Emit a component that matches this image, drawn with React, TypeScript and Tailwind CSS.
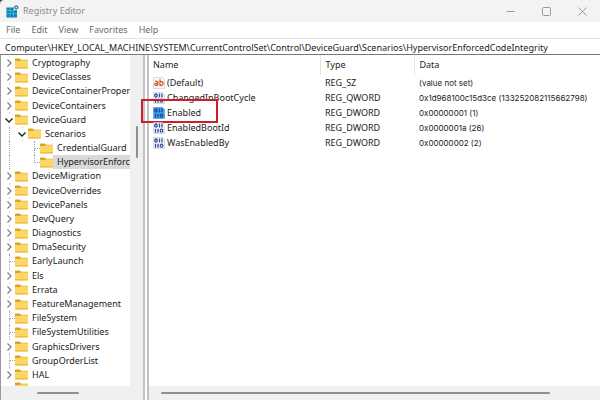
import { useState } from "react";

type TreeNode = {
  name: string;
  depth: number;
  toggle?: "open" | "closed";
  last?: boolean;
};

type RegValue = {
  name: string;
  type: string;
  data: string;
  kind: "string" | "binary";
};

const menus = ["File", "Edit", "View", "Favorites", "Help"];

const nodes: TreeNode[] = [
  { name: "Cryptography", depth: 0, toggle: "closed" },
  { name: "DeviceClasses", depth: 0, toggle: "closed" },
  { name: "DeviceContainerPropertyUpdateEvents", depth: 0, toggle: "closed" },
  { name: "DeviceContainers", depth: 0, toggle: "closed" },
  { name: "DeviceGuard", depth: 0, toggle: "open" },
  { name: "Scenarios", depth: 1, toggle: "open" },
  { name: "CredentialGuard", depth: 2 },
  { name: "HypervisorEnforcedCodeIntegrity", depth: 2, last: true },
  { name: "DeviceMigration", depth: 0, toggle: "closed" },
  { name: "DeviceOverrides", depth: 0, toggle: "closed" },
  { name: "DevicePanels", depth: 0, toggle: "closed" },
  { name: "DevQuery", depth: 0, toggle: "closed" },
  { name: "Diagnostics", depth: 0, toggle: "closed" },
  { name: "DmaSecurity", depth: 0, toggle: "closed" },
  { name: "EarlyLaunch", depth: 0 },
  { name: "Els", depth: 0, toggle: "closed" },
  { name: "Errata", depth: 0, toggle: "closed" },
  { name: "FeatureManagement", depth: 0, toggle: "closed" },
  { name: "FileSystem", depth: 0 },
  { name: "FileSystemUtilities", depth: 0 },
  { name: "GraphicsDrivers", depth: 0, toggle: "closed" },
  { name: "GroupOrderList", depth: 0 },
  { name: "HAL", depth: 0, toggle: "closed" },
];

const values: RegValue[] = [
  { name: "(Default)", type: "REG_SZ", data: "(value not set)", kind: "string" },
  {
    name: "ChangedInBootCycle",
    type: "REG_QWORD",
    data: "0x1d968100c15d3ce (133252082115662798)",
    kind: "binary",
  },
  { name: "Enabled", type: "REG_DWORD", data: "0x00000001 (1)", kind: "binary" },
  { name: "EnabledBootId", type: "REG_DWORD", data: "0x0000001a (26)", kind: "binary" },
  { name: "WasEnabledBy", type: "REG_DWORD", data: "0x00000002 (2)", kind: "binary" },
];

const AppIcon = () => (
  <svg viewBox="0 0 13 13" className="size-[13px] shrink-0">
    <path d="M.5 2.5H8v2.700h3V12.500H.5z" fill="#0b7fae" />
    <path d="M.5 5.500H8M.5 8.700h10.500M4 2.500v10M7.500 2.500v10" stroke="#45c3e6" strokeWidth=".8" />
    <path d="M10.200 0l2.200 1.200v2.400l-2.200 1.200L8.300 3.600V1.200z" fill="#2a86ae" />
    <path d="M10.300 1.200l1.100 1.200-1.100 1.200-1-1.200z" fill="#bfe8f5" />
  </svg>
);

const FolderIcon = () => (
  <svg viewBox="0 0 12 11" preserveAspectRatio="none" className="h-[11px] w-[13px] shrink-0">
    <path d="M0 1.2Q0 .5.7.5h3.6l1.4 1.3h5.6q.7 0 .7.7V6H0z" fill="#dba520" />
    <path d="M0 3.6q0-.6.7-.6h3.8l1.2-.7h5.6q.7 0 .7.7v6.800q0 .7-.7.7H.7q-.7 0-.7-.7z" fill="#fcd667" />
    <path d="M0 9h12v.8q0 .7-.7.7H.7q-.7 0-.7-.7z" fill="#f3bf40" />
  </svg>
);

const ValueIcon = ({ kind, selected }: { kind: string; selected: boolean }) => (
  <svg viewBox="0 0 12 12" className="size-3 shrink-0">
    <path
      d="M.5.5h9l2 2v9H.5z"
      fill={selected ? "#4ba6ea" : "#f8f8f8"}
      stroke={selected ? "#2f8bd6" : "#c4c4c4"}
      strokeWidth=".6"
    />
    {kind === "string" ? (
      <g fill="none" stroke="#d2502c" strokeWidth="1.2">
        <path d="M2 4.4h2q.9 0 .9.9v3M4.9 6.3H3q-1.2 0-1.2 1t1.2 1h1.900" />
        <path d="M7 2.2v6.1h1.8q1.2 0 1.2-1.2V5.800q0-1.200-1.200-1.200H7" />
      </g>
    ) : (
      <g fill="none" stroke={selected ? "#0c4d9c" : "#2f4ba8"} strokeWidth="1.300">
        <ellipse cx="3" cy="3.500" rx="1.200" ry="1.500" />
        <path d="M6.500 1.500v4M9 1.500v4M2.500 6.700v4M5 6.700v4" />
        <ellipse cx="8.500" cy="8.700" rx="1.300" ry="1.500" />
      </g>
    )}
  </svg>
);

const Toggle = ({ node, onClick }: { node: TreeNode; onClick: () => void }) => (
  <button
    aria-label={`Toggle ${node.name}`}
    onClick={onClick}
    className="flex h-full w-3 shrink-0 flex-col items-center justify-between"
  >
    <span className="size-px bg-[#ccc]"></span>
    <svg viewBox="0 0 8 8" className="size-2 shrink-0" fill="none">
      {node.toggle === "open" ? (
        <path d="M.5 2.500l3.500 3.500 3.500-3.500" stroke="#222" strokeWidth="1.400" />
      ) : (
        <path d="M2.500.5l3.500 3.500-3.500 3.500" stroke="#777" strokeWidth="1.100" />
      )}
    </svg>
    <span className="size-px bg-[#ccc]"></span>
  </button>
);

// dotted connector for keys that have no children
const Branch = ({ last }: { last?: boolean }) => (
  <div className="flex h-full w-3 shrink-0 flex-col pl-1.5">
    <div className="flex-1 border-b border-l border-dotted border-[#aaa]"></div>
    <div className={last ? "flex-1" : "flex-1 border-l border-dotted border-[#aaa]"}></div>
  </div>
);

const App = () => {
  // state
  const [path, setPath] = useState(
    "Computer\\HKEY_LOCAL_MACHINE\\SYSTEM\\CurrentControlSet\\Control\\DeviceGuard\\Scenarios\\HypervisorEnforcedCodeIntegrity"
  );
  const [activeKey, setActiveKey] = useState("HypervisorEnforcedCodeIntegrity");
  const [activeValue, setActiveValue] = useState("Enabled");

  return (
    <div className="flex h-screen flex-col overflow-hidden bg-white font-['Noto_Sans',sans-serif] text-[9px] leading-3 text-[#222]">
      {/* title bar */}
      <div className="shrink-0 bg-[#2b3350]">
        <header className="flex h-[22px] items-center justify-between rounded-tl-sm bg-[#f3f3f3] pl-1.5 text-[#8c8c8c]">
          <div className="flex items-center gap-1">
            <AppIcon />
            <h1>Registry Editor</h1>
          </div>
          <div className="flex h-full">
            <button aria-label="Minimize" className="flex w-9 items-center justify-center">
              <svg viewBox="0 0 9 9" className="size-[9px]" stroke="#999" fill="none">
                <path d="M.5 4.500h8" />
              </svg>
            </button>
            <button aria-label="Maximize" className="flex w-9 items-center justify-center">
              <svg viewBox="0 0 9 9" className="size-[9px]" stroke="#999" fill="none">
                <rect x=".5" y=".5" width="8" height="8" rx="1" />
              </svg>
            </button>
            <button aria-label="Close" className="flex w-9 items-center justify-center">
              <svg viewBox="0 0 9 9" className="size-[9px]" stroke="#999" fill="none">
                <path d="M.5.5l8 8M8.500.5l-8 8" />
              </svg>
            </button>
          </div>
        </header>
      </div>

      {/* menu */}
      <nav className="flex h-4 shrink-0 items-center gap-[11px] px-1.5 text-[#6a6a6a]">
        {menus.map((menu) => (
          <button key={menu}>{menu}</button>
        ))}
      </nav>

      {/* address */}
      <input
        aria-label="Address"
        value={path}
        onChange={(e) => setPath(e.target.value)}
        className="h-[17px] w-full shrink-0 border-t border-b border-t-[#e4e4e4] border-b-[#777] px-[5px] pt-px outline-none"
      />

      <main className="flex min-h-0 flex-1">
        {/* tree */}
        <section className="flex w-[145px] shrink-0 flex-col border-r-2 border-l border-r-[#c2c2c6] border-l-[#999] bg-[#f0f0f0]">
          <div className="flex min-h-0 flex-1">
            <div className="flex min-w-0 flex-1 flex-col overflow-hidden bg-white pt-px pl-0.5">
              <ul className="flex min-h-0 flex-1 flex-col">
                {nodes.map((node) => (
                  <li key={node.name} className="flex min-h-0 flex-1 items-center">
                    {node.depth > 0 && (
                      <div className="h-full w-[13px] shrink-0 pl-1.5">
                        <div className="h-full border-l border-dotted border-[#aaa]"></div>
                      </div>
                    )}
                    {node.depth > 1 && <div className="w-3 shrink-0"></div>}
                    {node.toggle ? (
                      <Toggle node={node} onClick={() => setActiveKey(node.name)} />
                    ) : (
                      <Branch last={node.last} />
                    )}
                    <FolderIcon />
                    <button
                      onClick={() => setActiveKey(node.name)}
                      className={`h-full min-w-0 flex-1 overflow-hidden pl-1 text-left whitespace-nowrap ${
                        node.name === activeKey ? "bg-[#d9d9d9]" : ""
                      }`}
                    >
                      {node.name}
                    </button>
                  </li>
                ))}
              </ul>
              <div className="h-1 shrink-0 overflow-hidden pl-3">
                <FolderIcon />
              </div>
            </div>
            <div className="flex w-[13px] shrink-0 justify-center pt-[71px]">
              <div className="h-8 w-0.5 rounded-full bg-[#8f8f8f]"></div>
            </div>
          </div>
          <div className="flex h-[14px] shrink-0 items-center pl-9">
            <div className="h-0.5 w-[42px] rounded-full bg-[#8f8f8f]"></div>
          </div>
        </section>

        {/* values */}
        <section className="ml-0.5 flex min-w-0 flex-1 flex-col border-l-2 border-[#c2c2c6]">
          <div className="min-h-0 flex-1">
            <table className="w-full table-fixed border-collapse text-left">
              <colgroup>
                <col className="w-[171px]" />
                <col className="w-[94px]" />
                <col />
              </colgroup>
              <thead>
                <tr className="h-5">
                  <th className="pl-1 font-normal">Name</th>
                  <th className="border-l border-[#e5e5e5] pl-[5px] font-normal">Type</th>
                  <th className="border-l border-[#e5e5e5] pl-[5px] font-normal">Data</th>
                </tr>
              </thead>
              <tbody>
                {values.map((value) => (
                  <tr key={value.name} className="h-[15px]" onClick={() => setActiveValue(value.name)}>
                    <td className="p-0 pl-1">
                      <div className="relative flex items-center gap-0.5">
                        <ValueIcon kind={value.kind} selected={value.name === activeValue} />
                        {value.name}
                        {value.name === activeValue && (
                          <div className="absolute -top-2 -left-3 h-6 w-[77px] border-2 border-[#cb2027]"></div>
                        )}
                      </div>
                    </td>
                    <td className="p-0 pl-[5px]">{value.type}</td>
                    <td className="p-0 pl-[5px] font-[Inter,sans-serif] text-[8px] whitespace-nowrap">{value.data}</td>
                  </tr>
                ))}
              </tbody>
            </table>
          </div>
          <div className="flex h-[14px] shrink-0 items-center bg-[#f0f0f0] pr-[50px] pl-3">
            <div className="h-0.5 flex-1 rounded-full bg-[#8f8f8f]"></div>
          </div>
        </section>
      </main>
    </div>
  );
};

export default App;
